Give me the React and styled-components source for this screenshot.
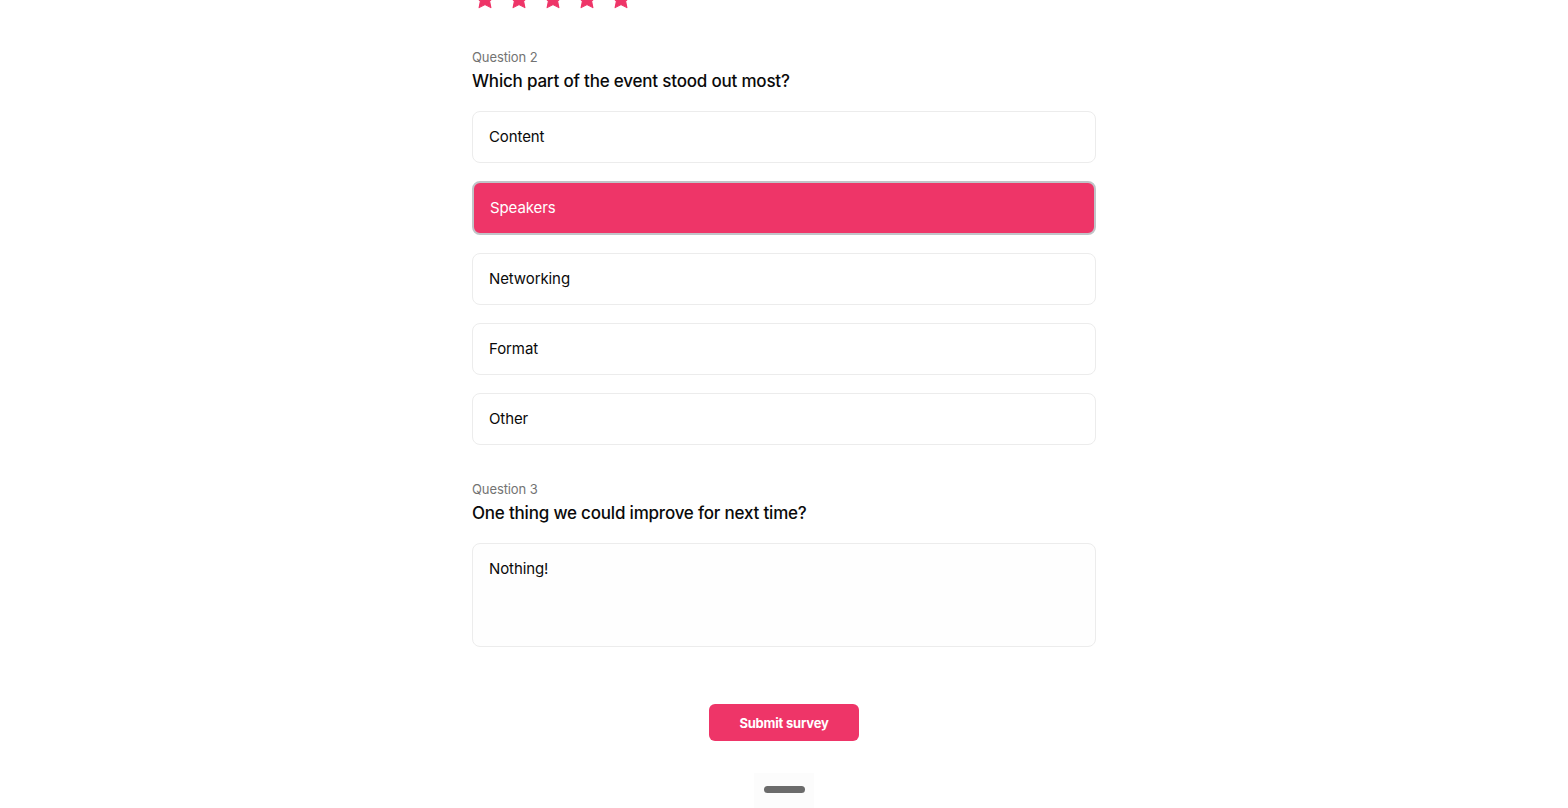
import React, { useState } from "react";
import styled, { createGlobalStyle } from "styled-components";

const Global = createGlobalStyle`
  html, body {
    margin: 0;
    background: #ffffff;
    font-family: Inter, "Noto Sans", sans-serif;
    color: #0a0a0a;
  }
  * { box-sizing: border-box; }
`;

const PINK = "#ee3568";

const Page = styled.main`
  width: 624px;
  margin: 0 auto;
  display: flex;
  flex-direction: column;
`;

const StarsClip = styled.div`
  height: 10px;
  overflow: hidden;
  display: flex;
  align-items: flex-end;
  gap: 12px;
  padding-left: 2px;
`;

const Star = () => (
  <svg width="22" height="22" viewBox="0 0 24 24" style={{ flex: "none" }}>
    <path
      d="M12 1.8l3.1 6.6 7.2.9-5.3 5 1.4 7.1L12 17.9l-6.4 3.5L7 14.3l-5.3-5 7.2-.9z"
      fill={PINK}
      stroke={PINK}
      strokeWidth="1.2"
      strokeLinejoin="round"
    />
  </svg>
);

const Section = styled.section`
  display: flex;
  flex-direction: column;
  margin-top: ${(p) => p.$top}px;
`;

const Label = styled.div`
  font-size: 13px;
  line-height: 20px;
  letter-spacing: -0.1px;
  color: #737373;
`;

const Title = styled.h2`
  margin: 0 0 16px;
  font-size: 17px;
  line-height: 28px;
  font-weight: 500;
  letter-spacing: -0.2px;
  color: #0a0a0a;
`;

const Options = styled.div`
  display: flex;
  flex-direction: column;
  gap: 18px;
`;

const Option = styled.button`
  width: 100%;
  text-align: left;
  font-family: inherit;
  font-size: 15px;
  line-height: 24px;
  letter-spacing: -0.1px;
  padding: 13px 16px;
  border-radius: 8px;
  cursor: pointer;
  border: ${(p) => (p.$active ? "2px solid #c1c4c8" : "1px solid #ececec")};
  background: ${(p) => (p.$active ? PINK : "#ffffff")};
  color: ${(p) => (p.$active ? "#ffffff" : "#0a0a0a")};
`;

const TextArea = styled.textarea`
  width: 100%;
  height: 104px;
  resize: none;
  font-family: inherit;
  font-size: 15px;
  line-height: 24px;
  letter-spacing: -0.1px;
  padding: 13px 16px;
  border: 1px solid #ececec;
  border-radius: 8px;
  background: #fefefe;
  color: #0a0a0a;
  caret-color: #0a0a0a;
  outline: none;
`;

const Footer = styled.div`
  display: flex;
  flex-direction: column;
  align-items: center;
  margin-top: 57px;
`;

const Submit = styled.button`
  width: 150px;
  height: 37px;
  border: none;
  border-radius: 6px;
  background: ${PINK};
  color: #ffffff;
  font-family: inherit;
  font-size: 13px;
  font-weight: 700;
  letter-spacing: -0.2px;
  cursor: pointer;
`;

const HandleArea = styled.div`
  margin-top: 32px;
  width: 60px;
  height: 35px;
  display: flex;
  justify-content: center;
  padding-top: 13px;
  background: #fcfcfc;
`;

const Handle = styled.div`
  width: 41px;
  height: 7px;
  border-radius: 4px;
  background: #6b6b6b;
`;

const choices = ["Content", "Speakers", "Networking", "Format", "Other"];

export default function App() {
  const [picked, setPicked] = useState("Speakers");
  const [text, setText] = useState("Nothing!");

  return (
    <>
      <Global />
      <Page>
        <StarsClip>
          {[0, 1, 2, 3, 4].map((i) => (
            <Star key={i} />
          ))}
        </StarsClip>

        <Section $top={37}>
          <Label>Question 2</Label>
          <Title>Which part of the event stood out most?</Title>
          <Options>
            {choices.map((c) => (
              <Option key={c} $active={picked === c} onClick={() => setPicked(c)}>
                {c}
              </Option>
            ))}
          </Options>
        </Section>

        <Section $top={34}>
          <Label>Question 3</Label>
          <Title>One thing we could improve for next time?</Title>
          <TextArea
            autoFocus
            value={text}
            onChange={(e) => setText(e.target.value)}
            onFocus={(e) => {
              const end = e.target.value.length;
              e.target.setSelectionRange(end, end);
            }}
          />
        </Section>

        <Footer>
          <Submit>Submit survey</Submit>
          <HandleArea>
            <Handle />
          </HandleArea>
        </Footer>
      </Page>
    </>
  );
}
